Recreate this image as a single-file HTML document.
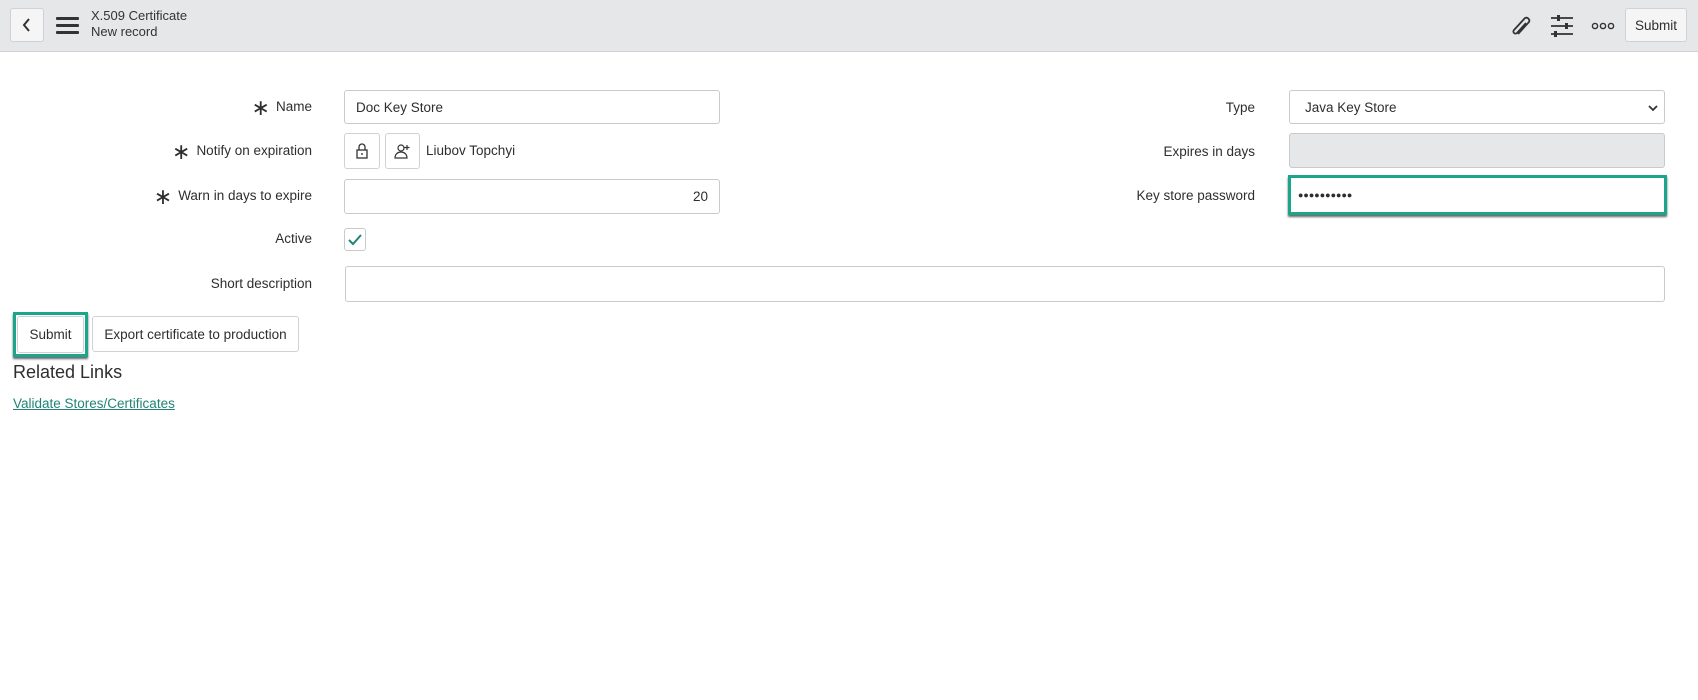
<!DOCTYPE html>
<html><head><style>
*{box-sizing:border-box;margin:0;padding:0}
body{width:1698px;height:700px;background:#fff;font-family:"Liberation Sans",sans-serif;color:#2e2e2e;position:relative;overflow:hidden;font-size:13.5px}
.hdr{position:absolute;left:0;top:0;width:1698px;height:52px;background:#e6e7e9;border-bottom:1px solid #cfd1d4}
.abs{position:absolute}
.btn{position:absolute;background:#f5f5f5;border:1px solid #cfd1d4;border-radius:3px;display:flex;align-items:center;justify-content:center}
.lbl{position:absolute;text-align:right;white-space:nowrap}
.inp{position:absolute;border:1px solid #c8cacc;border-radius:3px;background:#fff;padding-left:11px;display:flex;align-items:center}
.star{font-size:22px;line-height:14px;margin-right:6px;vertical-align:-4px;display:inline-block}
</style></head><body>
<div class="hdr">
 <div class="btn" style="left:10px;top:8px;width:34px;height:34px"><svg width="12" height="16"><path d="M8 2 L3 8 L8 14" stroke="#333" stroke-width="2" fill="none"/></svg></div>
 <svg class="abs" style="left:56px;top:17px" width="24" height="18"><rect y="0" width="23" height="3" rx="1" fill="#333"/><rect y="7" width="23" height="3" rx="1" fill="#333"/><rect y="14" width="23" height="3" rx="1" fill="#333"/></svg>
 <div class="abs" style="left:91px;top:8px;font-size:13px;line-height:16px;color:#333">X.509 Certificate<br>New record</div>
 <svg class="abs" style="left:1510px;top:14px" width="24" height="24"><path d="M8 20 L19 8 a3 3 0 0 0 -4 -4 L4 16 a2 2 0 0 0 3 3 L16 9" stroke="#333" stroke-width="1.8" fill="none"/></svg>
 <svg class="abs" style="left:1550px;top:14px" width="24" height="24"><path d="M1 4H23M1 12H23M1 20H23" stroke="#333" stroke-width="1.8"/><rect x="7" y="1" width="3" height="6" fill="#333"/><rect x="15" y="9" width="3" height="6" fill="#333"/><rect x="4" y="17" width="3" height="6" fill="#333"/></svg>
 <svg class="abs" style="left:1591px;top:21px" width="24" height="10"><circle cx="4" cy="5" r="2.6" stroke="#333" stroke-width="1.4" fill="none"/><circle cx="12" cy="5" r="2.6" stroke="#333" stroke-width="1.4" fill="none"/><circle cx="20" cy="5" r="2.6" stroke="#333" stroke-width="1.4" fill="none"/></svg>
 <div class="btn" style="left:1625px;top:8px;width:62px;height:34px;font-size:13.5px">Submit</div>
</div>

<div class="lbl" style="right:1386px;top:99px"><span class="star">∗</span>Name</div>
<div class="inp" style="left:344px;top:90px;width:376px;height:34px">Doc Key Store</div>
<div class="lbl" style="right:1386px;top:143px"><span class="star">∗</span>Notify on expiration</div>
<div class="btn" style="left:344px;top:133px;width:36px;height:36px;background:#fff"><svg width="14" height="16"><rect x="2" y="7" width="10" height="8" stroke="#333" fill="none" stroke-width="1.3"/><path d="M4 7V4a3 3 0 0 1 6 0v3M7 10v2" stroke="#333" fill="none" stroke-width="1.3"/></svg></div>
<div class="btn" style="left:385px;top:133px;width:35px;height:36px;background:#fff"><svg width="18" height="16"><circle cx="7" cy="5" r="3" stroke="#333" fill="none" stroke-width="1.2"/><path d="M1 15c0-4 3-6 6-6s6 2 6 6z M13 2v5M10.5 4.5h5" stroke="#333" fill="none" stroke-width="1.2"/></svg></div>
<div class="abs" style="left:426px;top:143px">Liubov Topchyi</div>
<div class="lbl" style="right:1386px;top:188px"><span class="star">∗</span>Warn in days to expire</div>
<div class="inp" style="left:344px;top:179px;width:376px;height:35px;justify-content:flex-end;padding-right:11px">20</div>
<div class="lbl" style="right:1386px;top:231px">Active</div>
<div class="abs" style="left:344px;top:228px;width:22px;height:23px;border:1px solid #c8cacc;border-radius:3px"><svg width="20" height="21"><path d="M4 11 L8 15 L16 6" stroke="#1f8476" stroke-width="2" fill="none"/></svg></div>
<div class="lbl" style="right:1386px;top:276px">Short description</div>
<div class="inp" style="left:345px;top:266px;width:1320px;height:36px"></div>

<div class="lbl" style="right:443px;top:100px">Type</div>
<div class="inp" style="left:1289px;top:90px;width:376px;height:34px;padding-left:15px">Java Key Store<svg style="position:absolute;right:6px;top:13px" width="10" height="8"><path d="M1 2L5 6L9 2" stroke="#333" stroke-width="1.8" fill="none"/></svg></div>
<div class="lbl" style="right:443px;top:144px">Expires in days</div>
<div class="inp" style="left:1289px;top:133px;width:376px;height:35px;background:#e6e7e9"></div>
<div class="lbl" style="right:443px;top:188px">Key store password</div>
<div class="abs" style="left:1288px;top:175px;width:379px;height:40px;border:3px solid #19a68a;box-shadow:0 2px 2px #666;background:#fff;padding:0 7px;line-height:34px;font-size:9px">●●●●●●●●●●</div>

<div class="abs" style="left:13px;top:312px;width:75px;height:45px;border:3px solid #19a68a;box-shadow:0 2px 2px #666"></div>
<div class="btn" style="left:17px;top:316px;width:67px;height:37px;background:#fff">Submit</div>
<div class="btn" style="left:92px;top:316px;width:207px;height:36px;background:#fff">Export certificate to production</div>
<div class="abs" style="left:13px;top:362px;font-size:18px">Related Links</div>
<div class="abs" style="left:13px;top:396px;font-size:13.5px;color:#1f8476;text-decoration:underline">Validate Stores/Certificates</div>
</body></html>
